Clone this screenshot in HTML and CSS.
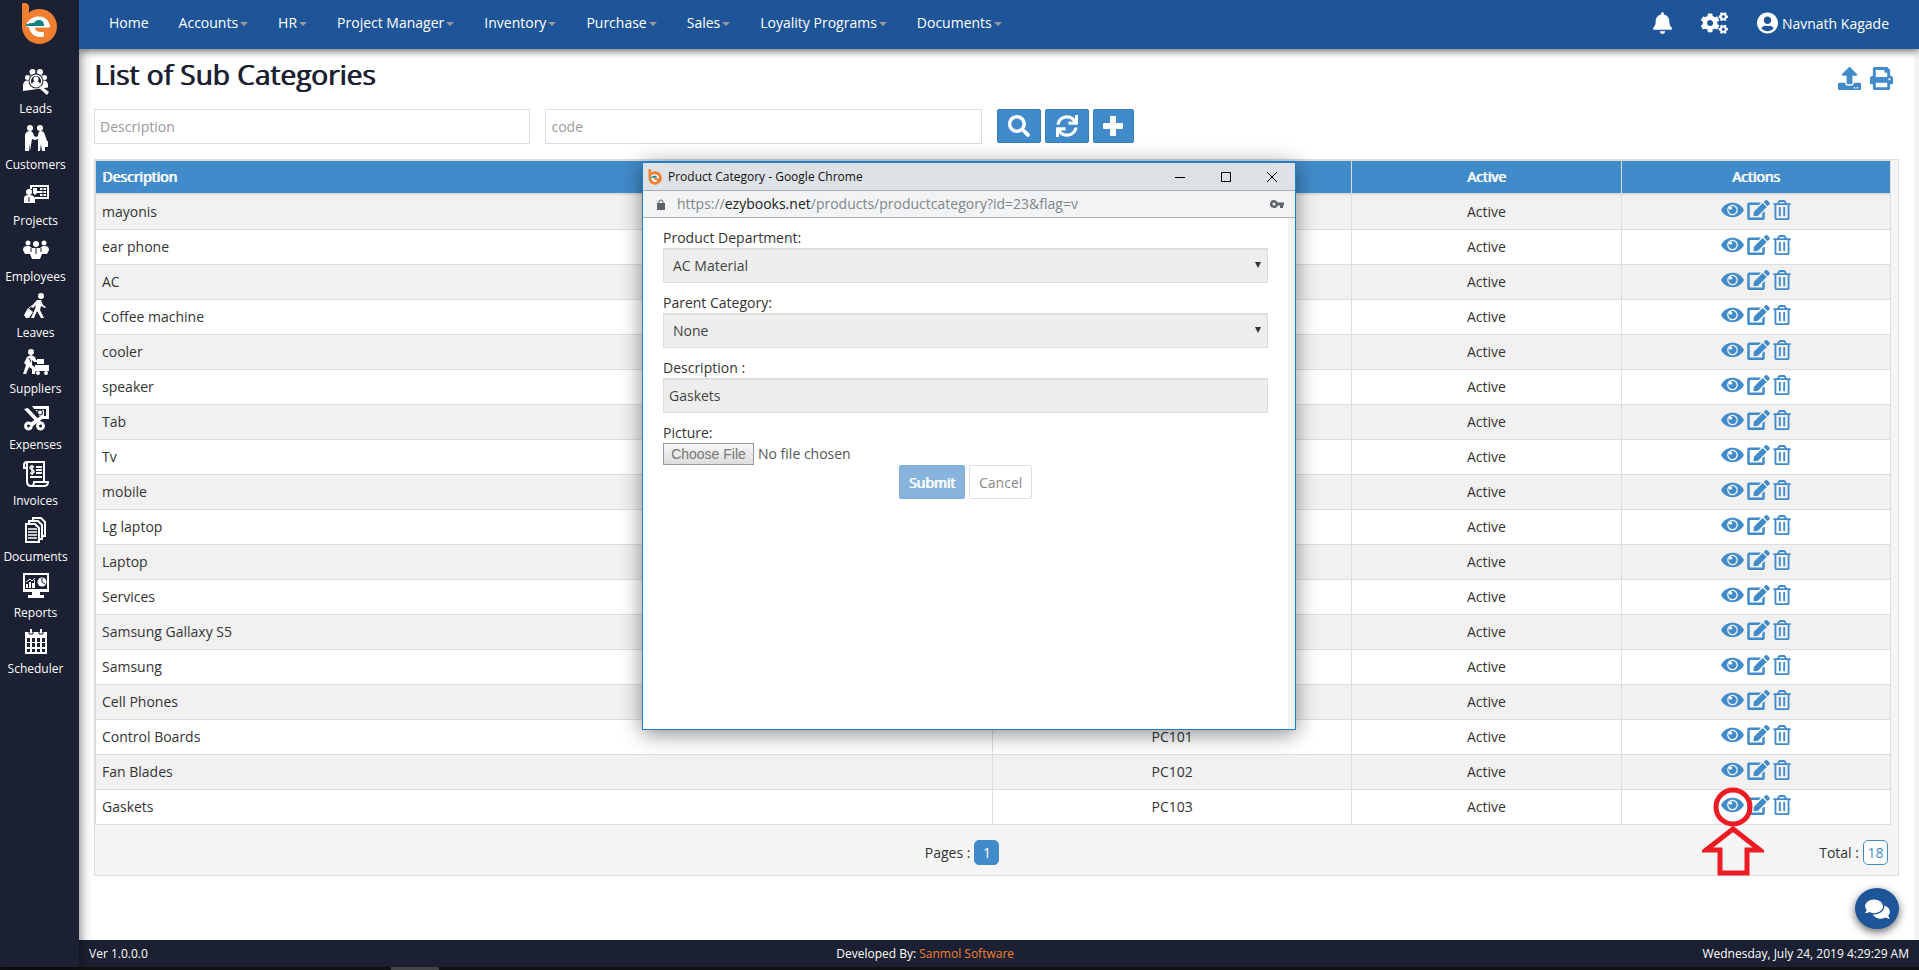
FILE: index.html
```html
<!DOCTYPE html>
<html lang="en">
<head>
<meta charset="utf-8">
<title>List of Sub Categories</title>
<link rel="stylesheet" href="styles.css">
</head>
<body>
<svg class="sprite" aria-hidden="true">
  <symbol id="logo" viewBox="0 0 36 42">
    <path fill="#f08030" d="M1 0h4q3 1 3 4v5.500a17.500 17.500 0 1 1-7 14z"/>
    <path fill="#fff" d="M5 23C7 16 12 13.500 18 13.500c7 0 11 5 11 11H14c0 4 4 5 9 4.500v4.500C14 35.500 9 30 8 24.500z"/>
    <path fill="#078284" d="M4 22c2-1 4-2 9-2 1-2 3-3 5-3 3 0 5 2 5 6H9c-2 0-4 0-5-1z"/>
  </symbol>
  <symbol id="eye" viewBox="0 0 576 512"><path d="M569.354 231.631C512.97 135.949 407.81 72 288 72 168.14 72 63.004 135.994 6.646 231.631a47.999 47.999 0 0 0 0 48.739C63.031 376.051 168.19 440 288 440c119.86 0 224.996-63.994 281.354-159.631a47.997 47.997 0 0 0 0-48.738zM288 392c-75.162 0-136-60.827-136-136 0-75.162 60.826-136 136-136 75.162 0 136 60.826 136 136 0 75.162-60.826 136-136 136zm104-136c0 57.438-46.562 104-104 104s-104-46.562-104-104c0-17.708 4.431-34.379 12.236-48.973l-.001.032c0 23.651 19.173 42.823 42.824 42.823s42.824-19.173 42.824-42.823c0-23.651-19.173-42.824-42.824-42.824l-.032.001C253.621 156.431 270.292 152 288 152c57.438 0 104 46.562 104 104z"/></symbol>
  <symbol id="edit" viewBox="0 0 576 512"><path d="M402.6 83.2l90.2 90.2c3.8 3.8 3.8 10 0 13.8L274.4 405.6l-92.8 10.3c-12.4 1.4-22.9-9.1-21.5-21.5l10.3-92.8L388.8 83.2c3.8-3.8 10-3.8 13.8 0zm162-22.9l-48.8-48.8c-15.2-15.2-39.9-15.2-55.2 0l-35.4 35.4c-3.8 3.8-3.8 10 0 13.8l90.2 90.2c3.8 3.8 10 3.8 13.8 0l35.4-35.400c15.200-15.300 15.200-40 0-55.200zM384 346.200V448H64V128h229.800c3.200 0 6.200-1.300 8.500-3.500l40-40c7.600-7.600 2.200-20.500-8.500-20.500H48C21.500 64 0 85.500 0 112v352c0 26.500 21.500 48 48 48h352c26.500 0 48-21.500 48-48V306.200c0-10.700-12.900-16-20.500-8.500l-40 40c-2.200 2.300-3.500 5.300-3.500 8.500z"/></symbol>
  <symbol id="trash" viewBox="0 0 448 512"><path d="M268 416h24a12 12 0 0 0 12-12V188a12 12 0 0 0-12-12h-24a12 12 0 0 0-12 12v216a12 12 0 0 0 12 12zM432 80h-82.41l-34-56.7A48 48 0 0 0 274.41 0H173.59a48 48 0 0 0-41.16 23.3L98.41 80H16A16 16 0 0 0 0 96v16a16 16 0 0 0 16 16h16v336a48 48 0 0 0 48 48h288a48 48 0 0 0 48-48V128h16a16 16 0 0 0 16-16V96a16 16 0 0 0-16-16zM171.84 50.91A6 6 0 0 1 177 48h94a6 6 0 0 1 5.15 2.91L293.61 80H154.39zM368 464H80V128h288zm-212-48h24a12 12 0 0 0 12-12V188a12 12 0 0 0-12-12h-24a12 12 0 0 0-12 12v216a12 12 0 0 0 12 12z"/></symbol>
  <symbol id="gear" viewBox="400 -10 250 230"><path d="M512.1 191l-8.2 14.3c-3 5.300-9.400 7.500-15.100 5.400-11.800-4.400-22.600-10.700-32.100-18.600-4.600-3.800-5.800-10.500-2.800-15.700l8.200-14.300c-6.900-8-12.300-17.300-15.900-27.400h-16.500c-6 0-11.200-4.300-12.200-10.300-2-12-2.100-24.600 0-37.100 1-6 6.200-10.400 12.200-10.400h16.500c3.600-10.100 9-19.400 15.900-27.400l-8.200-14.300c-3-5.200-1.900-11.900 2.800-15.700 9.500-7.900 20.400-14.200 32.100-18.600 5.700-2.100 12.100.1 15.100 5.400l8.200 14.300c10.500-1.900 21.200-1.900 31.700 0L552 6.300c3-5.300 9.400-7.500 15.100-5.400 11.800 4.400 22.600 10.700 32.100 18.600 4.600 3.800 5.800 10.500 2.800 15.700l-8.200 14.300c6.900 8 12.300 17.300 15.900 27.400h16.500c6 0 11.200 4.300 12.200 10.300 2 12 2.100 24.600 0 37.100-1 6-6.200 10.400-12.200 10.400h-16.500c-3.600 10.100-9 19.400-15.900 27.400l8.200 14.300c3 5.200 1.900 11.900-2.800 15.700-9.500 7.900-20.400 14.200-32.100 18.600-5.700 2.100-12.100-.1-15.100-5.400l-8.200-14.300c-10.400 1.900-21.200 1.900-31.700 0zm-10.500-58.800c38.500 29.600 82.400-14.300 52.800-52.800-38.500-29.700-82.400 14.300-52.800 52.800z"/></symbol>
</svg>

<aside class="sidebar">
  <a class="brand" href="#" aria-label="EzyBooks"><svg><use href="#logo"/></svg></a>
  <nav class="side-nav" aria-label="Modules">
    <a href="#"><svg viewBox="0 0 26 26"><circle cx="9.500" cy="3" r="3"/><circle cx="17" cy="3" r="3"/><circle cx="4.500" cy="8.500" r="2.500"/><circle cx="21.500" cy="8.500" r="2.500"/><path d="M6 9q0-3 3.500-3h8q3 0 3 3zM0 22v-5q0-5 4-5.500h17q3 0 4 4v3z"/><circle class="cut" cx="13" cy="12" r="7.500"/><circle cx="13" cy="12" r="6.500"/><circle class="cut" cx="13" cy="12" r="5"/><circle cx="13" cy="10" r="2.500"/><path d="M9 16q0-4 4-4t4 4q-4 2-8 0zM18 17l8 6-2 3-8-7z"/></svg>Leads</a>
    <a href="#"><svg viewBox="0 0 26 26"><circle cx="7" cy="3" r="3"/><circle cx="17" cy="3" r="3"/><path d="M2 10q1-4 5-4 3 0 4 5l2 1 2-1q0-5 3-5 3 0 4 4l2 6h1v6h-3v4h-3l-1-7-1 7h-2V14l-3 1-3-1-2 12H7v-8l-1 8H2z"/></svg>Customers</a>
    <a href="#"><svg viewBox="0 0 26 26"><path fill-rule="evenodd" d="M7 4h19v14H12v-2h12V6H9v2H7z"/><path d="M10 7h4v3h3v-3h6v8h-6v-3h-3l-2 2-2-2z"/><path class="line" d="M17 9.500h6M17 12.500h6M20 7v8"/><circle cx="6" cy="11" r="3"/><path d="M1 22v-5q0-3 5-3t6 3v5z"/><path class="line" d="M6 16v5"/></svg>Projects</a>
    <a href="#"><svg viewBox="0 0 26 26"><circle cx="13" cy="7" r="3"/><circle cx="5" cy="6" r="2.500"/><circle cx="21" cy="6" r="2.500"/><path d="M0 13q0-4 4-4h2l3 2h8l3-2h2q4 0 4 4l-2 4h-5l-2 5H9l-2-5H2z"/><path class="line" d="M13 11v6M8 11v4M18 11v4"/></svg>Employees</a>
    <a href="#"><svg viewBox="0 0 26 26"><circle cx="18" cy="3" r="3"/><path d="M14 7h4l2 5 3 2-1 1-4-2-1 4 4 8h-3l-4-7-3 7H8l4-9 1-4-3 3-2-1z"/><path d="M5 15l5 4-4 6H3l-2-3z"/><path fill="none" stroke="#fff" d="M6 15l4-3"/></svg>Leaves</a>
    <a href="#"><svg viewBox="0 0 26 26"><circle cx="8" cy="3" r="3"/><path d="M4 8l4-2 4 2 1 3h4v2h-6l-2-2v5l4 3-1 6h-3v-5l-3-2-3 7H0l3-9-2-2z"/><path d="M14 10h7v5h-7zM12 16h14v6H12z"/><circle cx="15" cy="24" r="2"/><circle cx="23" cy="24" r="2"/><path class="line" d="M6 9l2 4"/></svg>Suppliers</a>
    <a href="#"><svg viewBox="0 0 26 26"><path fill-rule="evenodd" d="M6 1h20v13h-8l2-3h3V4H11l-2-3zM13 5h8v6h-5z"/><circle class="cut" cx="17" cy="7.500" r="3"/><circle cx="17" cy="7.500" r="2"/><path d="M1 4l4-1 14 15-3 2zM19 10l3 2-12 9-3-3z"/><path fill="none" stroke="#fff" stroke-width="3" d="M5 18a3 3 0 1 0 1 0zM17 18a3 3 0 1 0 1 0z"/></svg>Expenses</a>
    <a href="#"><svg viewBox="0 0 26 26"><path fill="none" stroke="#fff" stroke-width="2" d="M4 7H1V4q0-3 3-3h17v19M4 2v18q0 5 4 5h13q4 0 4-4H11q0 4-3 4"/><path fill="none" stroke="#fff" stroke-width="2" d="M13 6h6M13 9h6M13 12h6M7 16h12"/><path fill="none" stroke="#fff" stroke-width="1.500" d="M11 6Q7 4 7 7q0 1 2 1.500t2 2Q11 13 7 12M9 4v10"/></svg>Invoices</a>
    <a href="#"><svg viewBox="0 0 26 26"><g fill="none" stroke="#fff" stroke-width="2"><path d="M3 7h9l4 4v14H3z"/><path d="M6 6V4h9l4 4v14h-2M10 3V1h8l4 4v14h-2"/></g><path fill="none" stroke="#fff" stroke-width="1.500" d="M5 12h9M5 15h9M5 18h9M5 21h9"/></svg>Documents</a>
    <a href="#"><svg viewBox="0 0 26 26"><path fill-rule="evenodd" d="M0 0h26v19h-9v3h4v3H5v-3h4v-3H0zM2 2v14h22V2z"/><path d="M3 11h2v4H3zM6 9h2v6H6zM9 10h2v5H9zM11 7h1v8h-1z"/><path fill="none" stroke="#fff" d="M3 9l4-3 2 2 3-3"/><circle cx="19" cy="9" r="4.500"/><path class="line" d="M19 5v4l3 2"/></svg>Reports</a>
    <a href="#"><svg viewBox="0 0 26 26"><path fill-rule="evenodd" d="M2 3h22v22H2zM4 9v4h3V9zm5 0v4h3V9zm5 0v4h3V9zm5 0v4h3V9zM4 14v4h3v-4zm5 0v4h3v-4zm5 0v4h3v-4zm5 0v4h3v-4zM4 20v3h3v-3zm5 0v3h3v-3zm5 0v3h3v-3zm5 0v3h3v-3z"/><path d="M7 0h2v5H7zM17 0h2v5h-2z"/><path class="line" d="M6 3v2h4V3M16 3v2h4V3"/></svg>Scheduler</a>
  </nav>
</aside>

<header class="topbar">
  <nav class="menu" aria-label="Main">
    <a href="#">Home</a>
    <a class="drop" href="#">Accounts</a>
    <a class="drop" href="#">HR</a>
    <a class="drop" href="#">Project Manager</a>
    <a class="drop" href="#">Inventory</a>
    <a class="drop" href="#">Purchase</a>
    <a class="drop" href="#">Sales</a>
    <a class="drop" href="#">Loyality Programs</a>
    <a class="drop" href="#">Documents</a>
  </nav>
  <div class="account">
    <a href="#" aria-label="Notifications"><svg class="bell" viewBox="0 0 448 512"><path d="M224 512c35.32 0 63.97-28.65 63.97-64H160.03c0 35.35 28.65 64 63.97 64zm215.39-149.71c-19.32-20.76-55.47-51.99-55.47-154.29 0-77.7-54.48-139.9-127.94-155.16V32c0-17.67-14.32-32-31.98-32s-31.98 14.33-31.98 32v20.84C118.56 68.1 64.08 130.3 64.08 208c0 102.3-36.15 133.53-55.47 154.29-6 6.45-8.66 14.16-8.61 21.71.11 16.4 12.98 32 32.1 32h383.8c19.12 0 32-15.6 32.1-32 .05-7.55-2.61-15.27-8.61-21.71z"/></svg></a>
    <a href="#" aria-label="Settings"><svg class="cogs" viewBox="0 0 640 512"><use href="#gear" x="400" y="-10" width="250" height="230"/><use href="#gear" x="400" y="289" width="250" height="230"/><path d="M386.3 286.1l33.7 16.8c10.1 5.8 14.5 18.1 10.5 29.1-8.9 24.2-26.4 46.4-42.6 65.8-7.4 8.9-20.2 11.1-30.3 5.3l-29.1-16.8c-16 13.7-34.6 24.6-54.9 31.7v33.6c0 11.6-8.3 21.6-19.7 23.6-24.6 4.2-50.4 4.4-75.9 0-11.5-2-20-11.9-20-23.6V418c-20.3-7.2-38.9-18-54.9-31.7L74 403c-10 5.8-22.9 3.6-30.3-5.3-16.2-19.4-33.3-41.6-42.2-65.7-4-10.9.4-23.2 10.5-29.1l33.3-16.8c-3.9-20.9-3.9-42.4 0-63.4L12 205.8c-10.100-5.800-14.600-18.100-10.500-29 8.900-24.200 26-46.400 42.200-65.800 7.400-8.900 20.200-11.100 30.300-5.300l29.100 16.800c16-13.700 34.600-24.600 54.900-31.700V57.100c0-11.500 8.200-21.500 19.600-23.500 24.600-4.200 50.500-4.400 76-.1 11.500 2 20 11.900 20 23.600v33.600c20.300 7.200 38.900 18 54.900 31.700l29.100-16.800c10-5.800 22.900-3.600 30.300 5.300 16.200 19.400 33.200 41.600 42.100 65.800 4 10.900.1 23.200-10 29.100l-33.700 16.800c3.900 21 3.900 42.500 0 63.500zm-117.600 21.100c59.200-77-28.700-164.900-105.700-105.700-59.200 77 28.700 164.900 105.700 105.700z"/></svg></a>
    <a class="user" href="#"><svg viewBox="0 0 496 512"><path d="M248 8C111 8 0 119 0 256s111 248 248 248 248-111 248-248S385 8 248 8zm0 96c48.6 0 88 39.4 88 88s-39.4 88-88 88-88-39.4-88-88 39.4-88 88-88zm0 344c-58.7 0-111.3-26.6-146.5-68.2 18.8-35.4 55.6-59.8 98.5-59.8 2.4 0 4.8.4 7.1 1.1 13 4.2 26.6 6.9 40.9 6.9 14.3 0 28-2.7 40.9-6.9 2.3-.7 4.700-1.100 7.100-1.100 42.900 0 79.700 24.400 98.500 59.800C359.300 421.400 306.700 448 248 448z"/></svg><span>Navnath Kagade</span></a>
  </div>
</header>

<main class="page">
  <div class="heading">
    <h1>List of Sub Categories</h1>
    <div class="tools">
      <a href="#" aria-label="Export"><svg viewBox="0 0 512 512"><path d="M296 384h-80c-13.3 0-24-10.700-24-24V192h-87.700c-17.800 0-26.700-21.500-14.100-34.100L242.300 5.700c7.500-7.500 19.800-7.500 27.300 0l152.200 152.200c12.600 12.600 3.700 34.100-14.100 34.100H320v168c0 13.300-10.700 24-24 24zm216-8v112c0 13.300-10.700 24-24 24H24c-13.300 0-24-10.700-24-24V376c0-13.300 10.700-24 24-24h136v8c0 30.900 25.100 56 56 56h80c30.900 0 56-25.100 56-56v-8h136c13.300 0 24 10.700 24 24zm-124 88c0-11-9-20-20-20s-20 9-20 20 9 20 20 20 20-9 20-20zm64 0c0-11-9-20-20-20s-20 9-20 20 9 20 20 20 20-9 20-20z"/></svg></a>
      <a href="#" aria-label="Print"><svg viewBox="0 0 512 512"><path d="M448 192V77.250c0-8.490-3.370-16.620-9.370-22.630L393.370 9.370c-6-6-14.140-9.370-22.630-9.370H96C78.330 0 64 14.330 64 32v160c-35.350 0-64 28.650-64 64v112c0 8.840 7.160 16 16 16h48v96c0 17.670 14.330 32 32 32h320c17.670 0 32-14.330 32-32v-96h48c8.840 0 16-7.160 16-16V256c0-35.350-28.650-64-64-64zm-64 256H128v-96h256v96zm0-224H128V64h192v48c0 8.840 7.160 16 16 16h48v96zm48 72c-13.250 0-24-10.750-24-24 0-13.260 10.750-24 24-24s24 10.740 24 24c0 13.250-10.750 24-24 24z"/></svg></a>
    </div>
  </div>

  <form class="filters">
    <input type="text" placeholder="Description" aria-label="Description">
    <input type="text" placeholder="code" aria-label="Code">
    <div class="filter-actions">
      <button type="button" aria-label="Search"><svg viewBox="0 0 512 512"><path d="M505 442.7L405.300 343c-4.500-4.500-10.600-7-17-7H372c27.600-35.300 44-79.700 44-128C416 93.100 322.900 0 208 0S0 93.100 0 208s93.100 208 208 208c48.300 0 92.700-16.400 128-44v16.300c0 6.400 2.500 12.500 7 17l99.700 99.700c9.400 9.400 24.600 9.400 33.900 0l28.300-28.300c9.400-9.400 9.400-24.600.1-34zM208 336c-70.700 0-128-57.200-128-128 0-70.700 57.200-128 128-128 70.700 0 128 57.200 128 128 0 70.700-57.200 128-128 128z"/></svg></button>
      <button type="button" aria-label="Refresh"><svg viewBox="0 0 512 512"><path d="M440.65 12.57l4 82.77A247.16 247.16 0 0 0 255.83 8C134.73 8 33.91 94.92 12.29 209.82A12 12 0 0 0 24.09 224h49.05a12 12 0 0 0 11.67-9.26 175.91 175.91 0 0 1 317-56.94l-101.46-4.86a12 12 0 0 0-12.57 12v47.41a12 12 0 0 0 12 12H500a12 12 0 0 0 12-12V12a12 12 0 0 0-12-12h-47.37a12 12 0 0 0-11.98 12.57zM255.83 432a175.61 175.61 0 0 1-146-77.8l101.8 4.87a12 12 0 0 0 12.57-12v-47.4a12 12 0 0 0-12-12H12a12 12 0 0 0-12 12V500a12 12 0 0 0 12 12h47.35a12 12 0 0 0 12-12.6l-4.15-82.57A247.17 247.17 0 0 0 255.83 504c121.11 0 221.93-86.92 243.55-201.82a12 12 0 0 0-11.8-14.18h-49.05a12 12 0 0 0-11.67 9.26A175.86 175.86 0 0 1 255.83 432z"/></svg></button>
      <button class="add" type="button" aria-label="Add"><svg viewBox="0 0 22 22"><path d="M9 1h4q1 0 1 1v6h6q1 0 1 1v4q0 1-1 1h-6v6q0 1-1 1H9q-1 0-1-1v-6H2q-1 0-1-1V9q0-1 1-1h6V2q0-1 1-1z"/></svg></button>
    </div>
  </form>

  <section class="grid">
    <table>
      <colgroup><col class="c-desc"><col class="c-code"><col class="c-flag"><col class="c-flag"></colgroup>
      <thead><tr><th>Description</th><th>Code</th><th>Active</th><th>Actions</th></tr></thead>
      <tbody>
        <tr><td>mayonis</td><td></td><td>Active</td><td><div class="acts"><a href="#" aria-label="View"><svg><use href="#eye"/></svg></a><a href="#" aria-label="Edit"><svg><use href="#edit"/></svg></a><a class="del" href="#" aria-label="Delete"><svg><use href="#trash"/></svg></a></div></td></tr>
        <tr><td>ear phone</td><td></td><td>Active</td><td><div class="acts"><a href="#" aria-label="View"><svg><use href="#eye"/></svg></a><a href="#" aria-label="Edit"><svg><use href="#edit"/></svg></a><a class="del" href="#" aria-label="Delete"><svg><use href="#trash"/></svg></a></div></td></tr>
        <tr><td>AC</td><td></td><td>Active</td><td><div class="acts"><a href="#" aria-label="View"><svg><use href="#eye"/></svg></a><a href="#" aria-label="Edit"><svg><use href="#edit"/></svg></a><a class="del" href="#" aria-label="Delete"><svg><use href="#trash"/></svg></a></div></td></tr>
        <tr><td>Coffee machine</td><td></td><td>Active</td><td><div class="acts"><a href="#" aria-label="View"><svg><use href="#eye"/></svg></a><a href="#" aria-label="Edit"><svg><use href="#edit"/></svg></a><a class="del" href="#" aria-label="Delete"><svg><use href="#trash"/></svg></a></div></td></tr>
        <tr><td>cooler</td><td></td><td>Active</td><td><div class="acts"><a href="#" aria-label="View"><svg><use href="#eye"/></svg></a><a href="#" aria-label="Edit"><svg><use href="#edit"/></svg></a><a class="del" href="#" aria-label="Delete"><svg><use href="#trash"/></svg></a></div></td></tr>
        <tr><td>speaker</td><td></td><td>Active</td><td><div class="acts"><a href="#" aria-label="View"><svg><use href="#eye"/></svg></a><a href="#" aria-label="Edit"><svg><use href="#edit"/></svg></a><a class="del" href="#" aria-label="Delete"><svg><use href="#trash"/></svg></a></div></td></tr>
        <tr><td>Tab</td><td></td><td>Active</td><td><div class="acts"><a href="#" aria-label="View"><svg><use href="#eye"/></svg></a><a href="#" aria-label="Edit"><svg><use href="#edit"/></svg></a><a class="del" href="#" aria-label="Delete"><svg><use href="#trash"/></svg></a></div></td></tr>
        <tr><td>Tv</td><td></td><td>Active</td><td><div class="acts"><a href="#" aria-label="View"><svg><use href="#eye"/></svg></a><a href="#" aria-label="Edit"><svg><use href="#edit"/></svg></a><a class="del" href="#" aria-label="Delete"><svg><use href="#trash"/></svg></a></div></td></tr>
        <tr><td>mobile</td><td></td><td>Active</td><td><div class="acts"><a href="#" aria-label="View"><svg><use href="#eye"/></svg></a><a href="#" aria-label="Edit"><svg><use href="#edit"/></svg></a><a class="del" href="#" aria-label="Delete"><svg><use href="#trash"/></svg></a></div></td></tr>
        <tr><td>Lg laptop</td><td></td><td>Active</td><td><div class="acts"><a href="#" aria-label="View"><svg><use href="#eye"/></svg></a><a href="#" aria-label="Edit"><svg><use href="#edit"/></svg></a><a class="del" href="#" aria-label="Delete"><svg><use href="#trash"/></svg></a></div></td></tr>
        <tr><td>Laptop</td><td></td><td>Active</td><td><div class="acts"><a href="#" aria-label="View"><svg><use href="#eye"/></svg></a><a href="#" aria-label="Edit"><svg><use href="#edit"/></svg></a><a class="del" href="#" aria-label="Delete"><svg><use href="#trash"/></svg></a></div></td></tr>
        <tr><td>Services</td><td></td><td>Active</td><td><div class="acts"><a href="#" aria-label="View"><svg><use href="#eye"/></svg></a><a href="#" aria-label="Edit"><svg><use href="#edit"/></svg></a><a class="del" href="#" aria-label="Delete"><svg><use href="#trash"/></svg></a></div></td></tr>
        <tr><td>Samsung Gallaxy S5</td><td></td><td>Active</td><td><div class="acts"><a href="#" aria-label="View"><svg><use href="#eye"/></svg></a><a href="#" aria-label="Edit"><svg><use href="#edit"/></svg></a><a class="del" href="#" aria-label="Delete"><svg><use href="#trash"/></svg></a></div></td></tr>
        <tr><td>Samsung</td><td></td><td>Active</td><td><div class="acts"><a href="#" aria-label="View"><svg><use href="#eye"/></svg></a><a href="#" aria-label="Edit"><svg><use href="#edit"/></svg></a><a class="del" href="#" aria-label="Delete"><svg><use href="#trash"/></svg></a></div></td></tr>
        <tr><td>Cell Phones</td><td></td><td>Active</td><td><div class="acts"><a href="#" aria-label="View"><svg><use href="#eye"/></svg></a><a href="#" aria-label="Edit"><svg><use href="#edit"/></svg></a><a class="del" href="#" aria-label="Delete"><svg><use href="#trash"/></svg></a></div></td></tr>
        <tr><td>Control Boards</td><td>PC101</td><td>Active</td><td><div class="acts"><a href="#" aria-label="View"><svg><use href="#eye"/></svg></a><a href="#" aria-label="Edit"><svg><use href="#edit"/></svg></a><a class="del" href="#" aria-label="Delete"><svg><use href="#trash"/></svg></a></div></td></tr>
        <tr><td>Fan Blades</td><td>PC102</td><td>Active</td><td><div class="acts"><a href="#" aria-label="View"><svg><use href="#eye"/></svg></a><a href="#" aria-label="Edit"><svg><use href="#edit"/></svg></a><a class="del" href="#" aria-label="Delete"><svg><use href="#trash"/></svg></a></div></td></tr>
        <tr><td>Gaskets</td><td>PC103</td><td>Active</td><td><div class="acts"><a class="marked" href="#" aria-label="View"><svg><use href="#eye"/></svg><svg class="marker" viewBox="0 0 62 92"><circle cx="31" cy="22" r="17"/><path d="M31 44L4 65h14v23h27V65h13z"/></svg></a><a href="#" aria-label="Edit"><svg><use href="#edit"/></svg></a><a class="del" href="#" aria-label="Delete"><svg><use href="#trash"/></svg></a></div></td></tr>
      </tbody>
    </table>
    <div class="pager">
      <span></span>
      <div>Pages : <button class="num current" type="button">1</button></div>
      <div>Total : <span class="num">18</span></div>
    </div>
  </section>
</main>

<footer class="status">
  <span>Ver 1.0.0.0</span>
  <span>Developed By: <a href="#">Sanmol Software</a></span>
  <span>Wednesday, July 24, 2019 4:29:29 AM</span>
</footer>
<div class="taskbar"></div>

<button class="chat" type="button" aria-label="Chat"><svg viewBox="0 0 576 512"><path d="M416 192c0-88.400-93.100-160-208-160S0 103.600 0 192c0 34.300 14.100 65.900 38 92-13.400 30.200-35.500 54.200-35.800 54.500-2.200 2.300-2.800 5.700-1.500 8.700S4.800 352 8 352c36.600 0 66.900-12.300 88.700-25 32.200 15.700 70.300 25 111.300 25 114.900 0 208-71.600 208-160zm122 220c23.900-26 38-57.700 38-92 0-66.900-53.500-124.200-129.300-148.100.9 6.600 1.300 13.300 1.300 20.100 0 105.900-107.700 192-240 192-10.800 0-21.300-.8-31.700-1.900C207.800 439.600 281.800 480 368 480c41 0 79.100-9.200 111.300-25 21.800 12.700 52.100 25 88.700 25 3.200 0 6.100-1.900 7.300-4.800 1.300-2.900.7-6.300-1.500-8.700-.3-.3-22.400-24.200-35.800-54.500z"/></svg></button>

<div class="window" role="dialog" aria-label="Product Category">
  <div class="titlebar">
    <svg class="favicon"><use href="#logo"/></svg>
    <span class="wtitle">Product Category - Google Chrome</span>
    <button type="button" aria-label="Minimize"><svg viewBox="0 0 10 10"><path d="M0 5.500h10"/></svg></button>
    <button type="button" aria-label="Maximize"><svg viewBox="0 0 10 10"><path d="M.5.5h9v9h-9z"/></svg></button>
    <button type="button" aria-label="Close"><svg viewBox="0 0 10 10"><path d="M0 0l10 10M10 0L0 10"/></svg></button>
  </div>
  <div class="address">
    <svg class="lock" viewBox="0 0 8 11"><path fill="#5f6368" d="M0 4h8v7H0z"/><path fill="none" stroke="#5f6368" d="M2 4V3a2 2 0 0 1 4 0v1"/></svg>
    <span class="url">https://<b>ezybooks.net</b>/products/productcategory?id=23&amp;flag=v</span>
    <svg class="key" viewBox="0 0 14 8"><path fill="#5f6368" fill-rule="evenodd" d="M4 0a4 4 0 0 1 3.700 2.500H14v3h-1V8h-3V5.500H7.700A4 4 0 1 1 4 0zm0 2.500a1.500 1.500 0 1 0 0 3 1.500 1.500 0 0 0 0-3z"/></svg>
  </div>
  <form class="dialog-form">
    <div class="field">
      <label for="dept">Product Department:</label>
      <div class="select"><select id="dept" disabled><option>AC Material</option></select><svg viewBox="0 0 6 6"><path d="M0 0h6L3 6z"/></svg></div>
    </div>
    <div class="field">
      <label for="parent">Parent Category:</label>
      <div class="select"><select id="parent" disabled><option>None</option></select><svg viewBox="0 0 6 6"><path d="M0 0h6L3 6z"/></svg></div>
    </div>
    <div class="field">
      <label for="desc">Description :</label>
      <input id="desc" type="text" value="Gaskets" disabled>
    </div>
    <label for="pic">Picture:</label>
    <input id="pic" type="file" disabled>
    <div class="buttons">
      <button class="submit" type="submit" disabled>Submit</button>
      <button class="cancel" type="button">Cancel</button>
    </div>
  </form>
</div>
</body>
</html>
```
FILE: styles.css
```css
* { box-sizing: border-box; }
body {
  margin: 0;
  min-height: 100vh;
  display: grid;
  grid-template-columns: 79px 1fr;
  grid-template-rows: 49px 1fr 27px 3px;
  background: #fff;
  color: #333;
  font: 14px/20px "Open Sans", "Noto Sans", sans-serif;
}
a { color: inherit; text-decoration: none; }
svg { display: block; fill: currentColor; }
button, input, select { font: inherit; color: inherit; margin: 0; }
.sprite { position: absolute; width: 0; height: 0; }

/* Sidebar */
.sidebar {
  grid-column: 1;
  grid-row: 1 / 4;
  z-index: 2;
  padding-right: 8px;
  background: #1b2032;
  color: #fff;
  box-shadow: 0 0 12px rgba(0, 0, 0, .6);
}
.brand { display: block; height: 63px; padding: 3px 0 0 21px; }
.brand svg { width: 36px; height: 42px; }
.side-nav a {
  display: flex;
  flex-direction: column;
  align-items: center;
  gap: 5px;
  height: 56px;
  padding-top: 6px;
  font-size: 12px;
  line-height: 18px;
}
.side-nav svg { width: 26px; height: 26px; }
.side-nav .cut { fill: #1b2032; }
.side-nav .line { fill: none; stroke: #1b2032; }

/* Top bar */
.topbar {
  z-index: 3;
  display: flex;
  justify-content: space-between;
  background: #1e5598;
  color: #fff;
  box-shadow: 0 2px 8px rgba(0, 0, 0, .6);
  clip-path: inset(0 0 -20px 0);
}
.menu { display: flex; padding: 13px 0 0 15px; }
.menu a { padding: 0 15px; }
.drop::after {
  content: "";
  display: inline-block;
  margin-left: 2px;
  vertical-align: 2px;
  border: 4px solid transparent;
  border-top-color: #9a9a9a;
  border-bottom: 0;
}
.account { display: flex; align-items: center; gap: 29px; padding: 0 30px 3px 0; }
.bell { width: 19px; height: 22px; }
.cogs { width: 27px; height: 22px; }
.user { display: flex; align-items: center; gap: 4px; }
.user svg { width: 21px; height: 22px; }
.user span { padding-top: 2px; }

/* Page */
.page { padding: 8px 20px 0 15px; box-shadow: inset -5px 0 #f5f5f5; }
.heading { display: flex; justify-content: space-between; }
h1 {
  margin: 0;
  color: #1b2032;
  font-size: 28px;
  font-weight: 400;
  line-height: 34px;
  text-shadow: 1px 0 #1b2032;
}
.tools { display: flex; gap: 9px; padding: 10px 6px 0 0; color: #428bca; }
.tools svg { width: 23px; height: 23px; }
.filters {
  display: grid;
  grid-template-columns: 60fr 60fr 124fr;
  gap: 15px;
  margin: 18px 0 15px;
}
.filters input {
  width: 100%;
  height: 35px;
  padding: 0 5px;
  border: 1px solid #ddd;
  background: #fff;
}
::placeholder { color: #999; opacity: 1; }
.filter-actions { display: flex; gap: 4px; }
.filter-actions button {
  display: grid;
  place-items: center;
  width: 44px;
  height: 34px;
  padding: 0;
  border: 1px solid #357ebd;
  border-radius: 2px;
  background: #428bca;
  color: #fff;
}
.filter-actions .add { width: 41px; }
.filter-actions svg { width: 22px; height: 22px; }

.grid {
  padding-right: 7px;
  border: 1px solid #ddd;
  background: #f5f5f5;
}
table {
  width: 100%;
  table-layout: fixed;
  border-collapse: separate;
  border-spacing: 0;
  border-top: 1px solid #ddd;
}
.c-desc { width: 50%; }
.c-code { width: 20%; }
.c-flag { width: 15%; }
th, td {
  height: 35px;
  padding: 0 6px;
  border: 1px solid #ddd;
  border-width: 0 1px 1px 0;
  text-align: center;
}
th {
  height: 34px;
  border-bottom-width: 2px;
  background: #428bca;
  color: #fff;
  font-weight: 400;
  text-shadow: 1px 0 #fff;
}
th:first-child, td:first-child { border-left-width: 1px; text-align: left; }
tbody tr { background: #fff; }
tbody tr:nth-child(odd) { background: #f1f1f1; }
.acts { display: flex; justify-content: center; gap: 3px; padding-bottom: 5px; color: #428bca; }
.acts svg { width: 23px; height: 20px; }
.acts .del svg { width: 18px; }
.marked { position: relative; }
.acts .marker {
  position: absolute;
  left: -19px;
  top: -10px;
  width: 62px;
  height: 92px;
  fill: none;
  stroke: #ed1c24;
  stroke-width: 5px;
}
.pager {
  display: flex;
  justify-content: space-between;
  padding: 15px 3px 10px 10px;
}
.pager div { display: flex; align-items: center; gap: 4px; }
.num {
  width: 25px;
  height: 25px;
  padding: 0;
  border: 1px solid #428bca;
  border-radius: 5px;
  background: #fff;
  color: #428bca;
  line-height: 23px;
  text-align: center;
}
.num.current { background: #428bca; color: #fff; }

/* Footer */
.status {
  grid-column: 2;
  display: flex;
  justify-content: space-between;
  padding: 0 10px;
  background: #1b2032;
  color: #fff;
  font-size: 12px;
  line-height: 27px;
}
.status a { color: #f08030; }
.taskbar {
  grid-column: 1 / 3;
  background: linear-gradient(#444, #444) 391px 0 / 48px 3px no-repeat #111;
}
.chat {
  position: fixed;
  right: 20px;
  bottom: 41px;
  z-index: 4;
  display: grid;
  place-items: center;
  width: 44px;
  height: 41px;
  padding: 0;
  border: 0;
  border-radius: 50%;
  background: #1e5598;
  color: #fff;
  box-shadow: 0 3px 8px rgba(0, 0, 0, .6);
}
.chat svg { width: 25px; height: 22px; }

/* Popup window */
.window {
  position: absolute;
  left: 642px;
  top: 161px;
  z-index: 5;
  display: flex;
  flex-direction: column;
  width: 654px;
  height: 569px;
  border: 1px solid #1e7fcb;
  border-top-width: 2px;
  background: #fff;
  box-shadow: 0 4px 20px rgba(0, 0, 0, .45);
}
.titlebar {
  display: flex;
  align-items: center;
  height: 28px;
  padding-left: 5px;
  border-bottom: 1px solid #a8abaf;
  background: #dee1e6;
  color: #111;
  font-size: 12px;
}
.favicon { width: 14px; height: 16px; }
.wtitle { flex: 1; padding-left: 6px; }
.titlebar button {
  display: grid;
  place-items: center;
  width: 46px;
  height: 27px;
  padding: 0;
  border: 0;
  background: none;
}
.titlebar button svg { width: 10px; height: 10px; fill: none; stroke: #000; overflow: visible; }
.address {
  display: flex;
  align-items: center;
  height: 27px;
  padding: 0 11px 0 14px;
  border-bottom: 1px solid #a8abaf;
  background: #f1f3f4;
  color: #80868b;
}
.lock { width: 8px; height: 11px; }
.url { flex: 1; padding-left: 12px; }
.url b { color: #202124; font-weight: 400; }
.key { width: 14px; height: 8px; }
.dialog-form { flex: 1; padding: 10px 27px 0 20px; box-shadow: inset -7px 0 #f3f3f3; }
.dialog-form label { display: block; }
.field { margin-bottom: 10px; }
.field input, .field select {
  display: block;
  width: 100%;
  height: 35px;
  padding: 0 5px 1px;
  border: 1px solid #ddd;
  border-top-width: 2px;
  border-radius: 0;
  background: #eee;
  color: #444;
  opacity: 1;
}
.select { position: relative; }
.select select { appearance: none; padding: 0 9px; }
.select svg { position: absolute; right: 7px; top: 14px; width: 6px; height: 6px; }
#pic { display: block; width: 100%; height: 22px; color: #555; }
#pic::file-selector-button {
  width: 91px;
  height: 22px;
  margin: 0 4px 0 0;
  padding: 0;
  border: 1px solid #999;
  border-radius: 0;
  background: linear-gradient(#f6f6f6, #ddd);
  color: #777;
  font: 14px/20px "Liberation Sans", Arial, sans-serif;
}
.buttons { display: flex; justify-content: center; gap: 4px; }
.buttons button {
  height: 34px;
  padding: 1px 9px 0;
  border: 1px solid #7badd9;
  border-radius: 2px;
  background: #87b3dd;
  color: #fff;
}
.buttons .submit { text-shadow: 1px 0 #fff; }
.buttons .cancel { border-color: #ddd; background: #fff; color: #888; }
```
